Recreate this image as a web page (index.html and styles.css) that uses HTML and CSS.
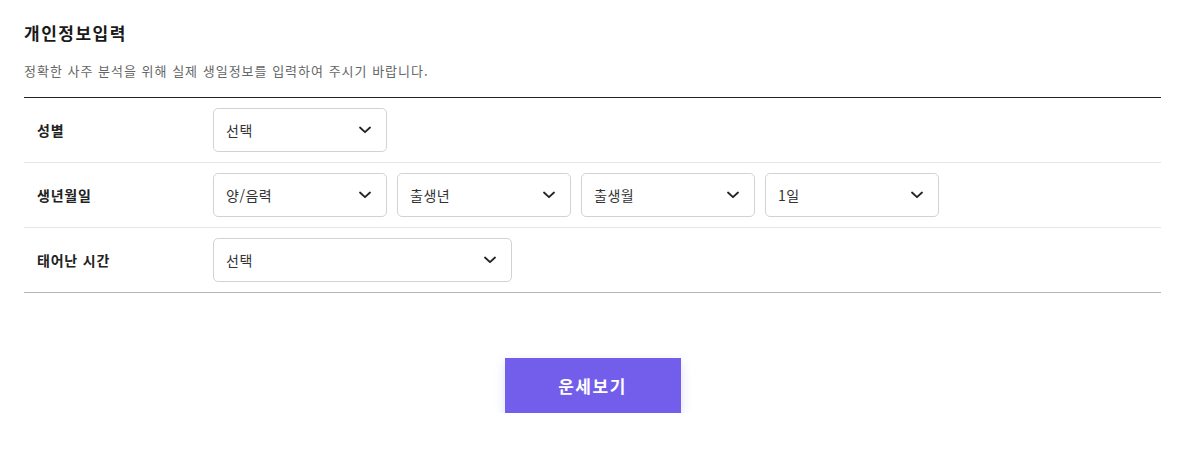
FILE: index.html
```html
<!DOCTYPE html>
<html lang="ko">
<head>
<meta charset="utf-8">
<title>개인정보입력</title>
<link rel="stylesheet" href="styles.css">
</head>
<body>
<div class="page">
  <h2 class="title">개인정보입력</h2>
  <p class="desc">정확한 사주 분석을 위해 실제 생일정보를 입력하여 주시기 바랍니다.</p>
  <div class="form">
    <div class="row">
      <div class="label">성별</div>
      <div class="fields">
        <div class="select"><span>선택</span><svg class="chev" viewBox="0 0 12 8"><path d="M1 1.5 6 6.2 11 1.5"/></svg></div>
      </div>
    </div>
    <div class="row">
      <div class="label">생년월일</div>
      <div class="fields">
        <div class="select"><span>양/음력</span><svg class="chev" viewBox="0 0 12 8"><path d="M1 1.5 6 6.2 11 1.5"/></svg></div>
        <div class="select"><span>출생년</span><svg class="chev" viewBox="0 0 12 8"><path d="M1 1.5 6 6.2 11 1.5"/></svg></div>
        <div class="select"><span>출생월</span><svg class="chev" viewBox="0 0 12 8"><path d="M1 1.5 6 6.2 11 1.5"/></svg></div>
        <div class="select"><span>1일</span><svg class="chev" viewBox="0 0 12 8"><path d="M1 1.5 6 6.2 11 1.5"/></svg></div>
      </div>
    </div>
    <div class="row last">
      <div class="label">태어난 시간</div>
      <div class="fields">
        <div class="select wide"><span>선택</span><svg class="chev" viewBox="0 0 12 8"><path d="M1 1.5 6 6.2 11 1.5"/></svg></div>
      </div>
    </div>
  </div>
  <div class="actions">
    <button class="btn" type="button">운세보기</button>
  </div>
</div>
</body>
</html>
```
FILE: styles.css
```css
* { box-sizing: border-box; }
body {
  margin: 0;
  background: #fff;
  font-family: "Noto Sans CJK KR", "Noto Sans", sans-serif;
  color: #222;
}
.page {
  width: 1137px;
  margin-left: 24px;
  padding-top: 23px;
}
.title {
  margin: 0;
  font-size: 17px;
  line-height: 20px;
  font-weight: 700;
  letter-spacing: 1.5px;
  color: #1a1a1a;
}
.desc {
  margin: 19px 0 0;
  font-size: 13px;
  line-height: 18px;
  letter-spacing: 1px;
  color: #666;
}
.form {
  margin-top: 17px;
  border-top: 1px solid #222;
}
.row {
  display: grid;
  grid-template-columns: 189px 1fr;
  align-items: center;
  padding: 10px 0;
  border-bottom: 1px solid #e6e6e6;
}
.row.last { border-bottom-color: #b5b5b5; }
.label {
  padding-left: 13px;
  font-size: 14px;
  font-weight: 700;
  letter-spacing: 0.8px;
  color: #222;
}
.fields {
  display: flex;
  gap: 10px;
}
.select {
  width: 174px;
  height: 44px;
  border: 1px solid #d2d2d2;
  border-radius: 5px;
  display: flex;
  align-items: center;
  justify-content: space-between;
  padding: 0 15px 0 12px;
  font-size: 14px;
  letter-spacing: 0.5px;
  color: #333;
}
.select.wide { width: 299px; }
.chev {
  width: 12px;
  height: 8px;
  fill: none;
  stroke: #222;
  stroke-width: 1.8;
  stroke-linecap: round;
  stroke-linejoin: round;
}
.actions {
  display: flex;
  justify-content: center;
  margin-top: 65px;
}
.btn {
  width: 176px;
  height: 55px;
  border: 0;
  background: #725eeb;
  color: #fff;
  font-family: inherit;
  font-size: 17px;
  font-weight: 700;
  letter-spacing: 1.5px;
  box-shadow: 0 4px 10px rgba(114, 94, 235, 0.22);
  cursor: pointer;
}
```
